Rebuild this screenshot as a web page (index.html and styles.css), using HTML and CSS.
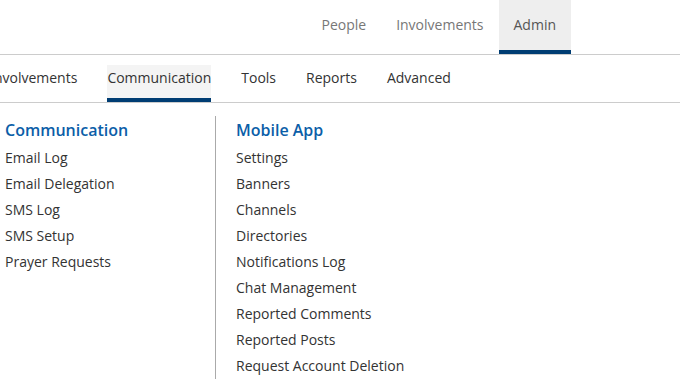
FILE: index.html
```html
<!DOCTYPE html>
<html lang="en">
<head>
    <meta charset="UTF-8">
    <meta name="viewport" content="width=device-width, initial-scale=1.0">
    <title>Admin - Communication</title>
    <link rel="stylesheet" href="styles.css">
</head>
<body>
    <header class="top-nav">
        <a class="top-link" href="#">People</a>
        <a class="top-link" href="#">Involvements</a>
        <a class="top-link active" href="#">Admin</a>
    </header>

    <nav class="sub-nav">
        <a class="sub-link" href="#">Involvements</a>
        <a class="sub-link active" href="#">Communication</a>
        <a class="sub-link" href="#">Tools</a>
        <a class="sub-link" href="#">Reports</a>
        <a class="sub-link" href="#">Advanced</a>
    </nav>

    <main class="menu">
        <section class="menu-col">
            <h3 class="menu-title">Communication</h3>
            <a class="menu-item" href="#">Email Log</a>
            <a class="menu-item" href="#">Email Delegation</a>
            <a class="menu-item" href="#">SMS Log</a>
            <a class="menu-item" href="#">SMS Setup</a>
            <a class="menu-item" href="#">Prayer Requests</a>
        </section>

        <section class="menu-col menu-col-right">
            <h3 class="menu-title">Mobile App</h3>
            <a class="menu-item" href="#">Settings</a>
            <a class="menu-item" href="#">Banners</a>
            <a class="menu-item" href="#">Channels</a>
            <a class="menu-item" href="#">Directories</a>
            <a class="menu-item" href="#">Notifications Log</a>
            <a class="menu-item" href="#">Chat Management</a>
            <a class="menu-item" href="#">Reported Comments</a>
            <a class="menu-item" href="#">Reported Posts</a>
            <a class="menu-item" href="#">Request Account Deletion</a>
        </section>
    </main>
</body>
</html>
```

FILE: styles.css
```css
* {
    margin: 0;
    padding: 0;
    box-sizing: border-box;
}

body {
    font-family: 'Open Sans', 'Liberation Sans', Arial, sans-serif;
    font-size: 14px;
    line-height: 20px;
    color: #333;
    background: #fff;
    overflow: hidden;
}

a {
    text-decoration: none;
    color: inherit;
}

/* top bar */
.top-nav {
    display: flex;
    justify-content: flex-end;
    padding-right: 109px;
    border-bottom: 1px solid #ccc;
}

.top-link {
    padding: 15px 15px;
    border-bottom: 4px solid transparent;
    color: #777;
}

.top-link.active {
    background: #eee;
    color: #555;
    border-bottom-color: #003d73;
}

/* second level */
.sub-nav {
    display: flex;
    align-items: flex-end;
    gap: 30px;
    margin-left: -10px;
    padding-top: 10px;
    border-bottom: 1px solid #ccc;
}

.sub-link {
    padding: 3px 0 10px;
    border-bottom: 4px solid transparent;
    color: #333;
}

.sub-link.active {
    background: #f4f4f4;
    border-bottom-color: #003d73;
}

/* menu columns */
.menu {
    display: flex;
    padding: 13px 0 0 5px;
}

.menu-col {
    width: 210px;
    display: flex;
    flex-direction: column;
}

.menu-col-right {
    width: auto;
    padding-left: 20px;
    border-left: 1px solid #aaa;
}

.menu-title {
    font-size: 16px;
    font-weight: 600;
    line-height: 24px;
    color: #0b5ea8;
    margin: 2px 0 3px;
}

.menu-item {
    line-height: 26px;
    color: #333;
}
```
